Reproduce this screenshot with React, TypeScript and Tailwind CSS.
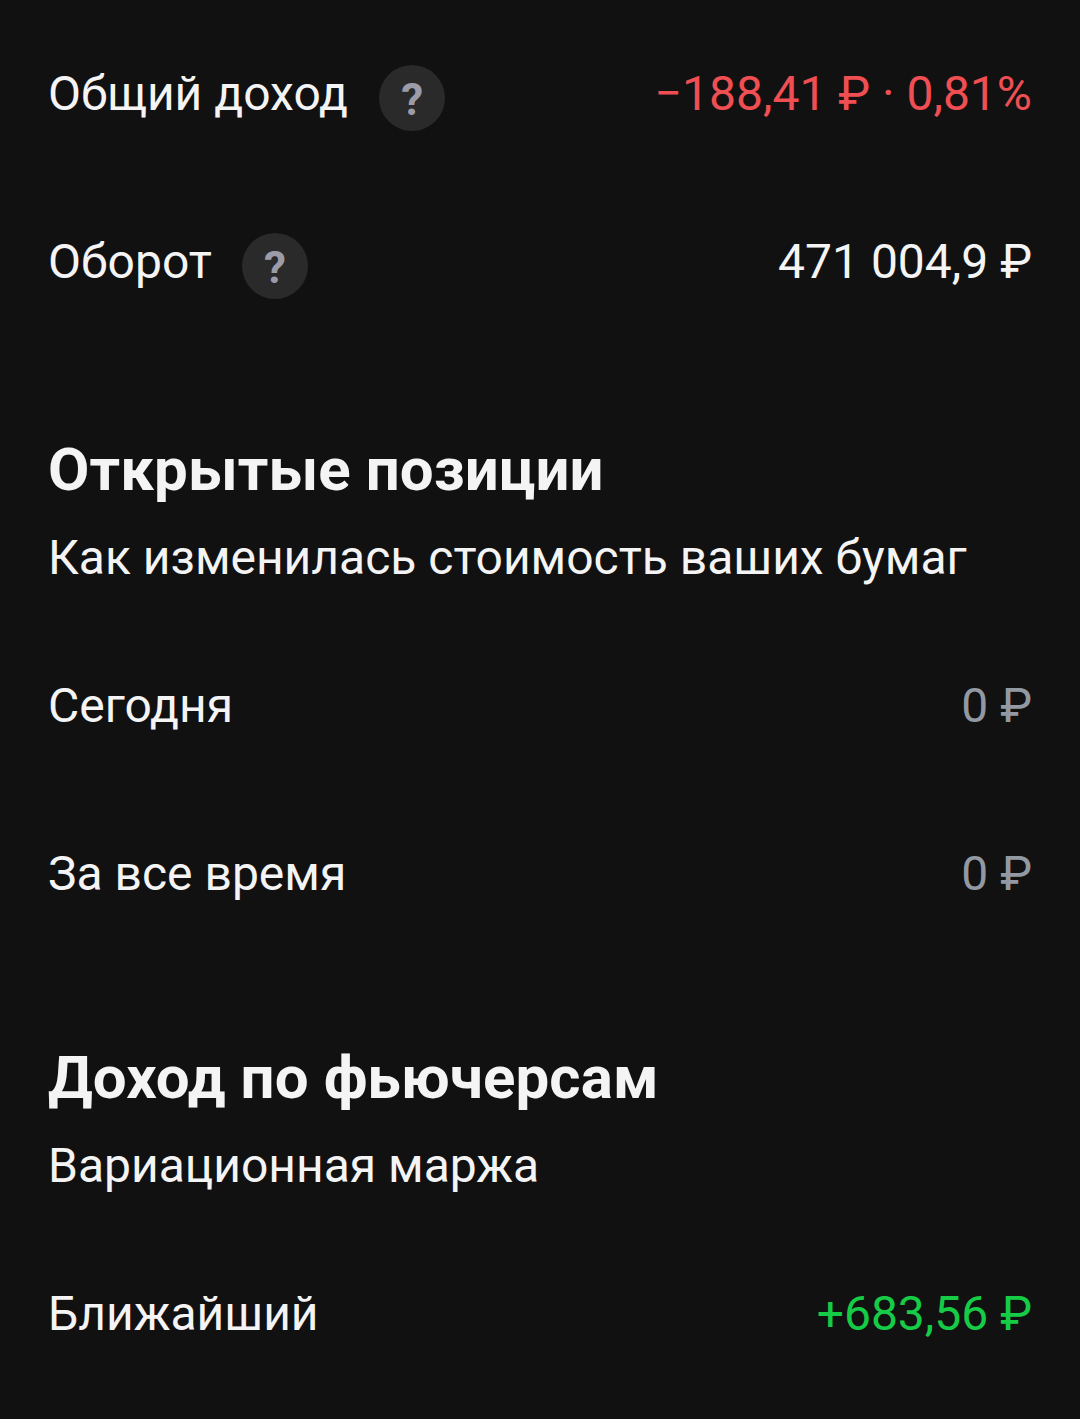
function Help() {
  return (
    <span className="flex h-[66px] w-[66px] items-center justify-center rounded-full bg-[#2a2a2b] pt-[3px] text-[44px] font-bold leading-none text-[#9c9ca8]">
      ?
    </span>
  );
}

function Row({ label, help, gap, value, color, className }: { label: string; help?: boolean; gap?: string; value: string; color: string; className: string }) {
  return (
    <div className={`flex h-[66px] items-center justify-between ${className}`}>
      <div className={`flex items-center ${gap}`}>
        <span className="pb-[8px] text-[48px] leading-[56px] text-[#f4f4f5]">{label}</span>
        {help && <Help />}
      </div>
      <span className={`pb-[8px] text-[48px] leading-[56px] ${color}`}>{value}</span>
    </div>
  );
}

export default function App() {
  return (
    <div className="h-[1419px] overflow-hidden bg-[#111112] px-[48px] pt-[65px] font-['Roboto',sans-serif]">
      <Row label="Общий доход" help gap="gap-[31px]" value="−188,41 ₽ · 0,81%" color="text-[#ef4f52]" className="" />
      <Row label="Оборот" help gap="gap-[30px]" value="471 004,9 ₽" color="text-[#f4f4f5]" className="mt-[102px]" />
      <h2 className="mt-[136px] text-[60px] font-bold leading-[70px] tracking-[0.1px] text-[#f4f4f5]">Открытые позиции</h2>
      <p className="mt-[25px] text-[48px] leading-[56px] text-[#f4f4f5]">Как изменилась стоимость ваших бумаг</p>
      <Row label="Сегодня" value="0 ₽" color="text-[#9299a2]" className="mt-[91px]" />
      <Row label="За все время" value="0 ₽" color="text-[#9299a2]" className="mt-[102px]" />
      <h2 className="mt-[132px] text-[60px] font-bold leading-[70px] tracking-[0.1px] text-[#f4f4f5]">Доход по фьючерсам</h2>
      <p className="mt-[25px] text-[48px] leading-[56px] text-[#f4f4f5]">Вариационная маржа</p>
      <Row label="Ближайший" value="+683,56 ₽" color="text-[#16cc46]" className="mt-[91px]" />
    </div>
  );
}
